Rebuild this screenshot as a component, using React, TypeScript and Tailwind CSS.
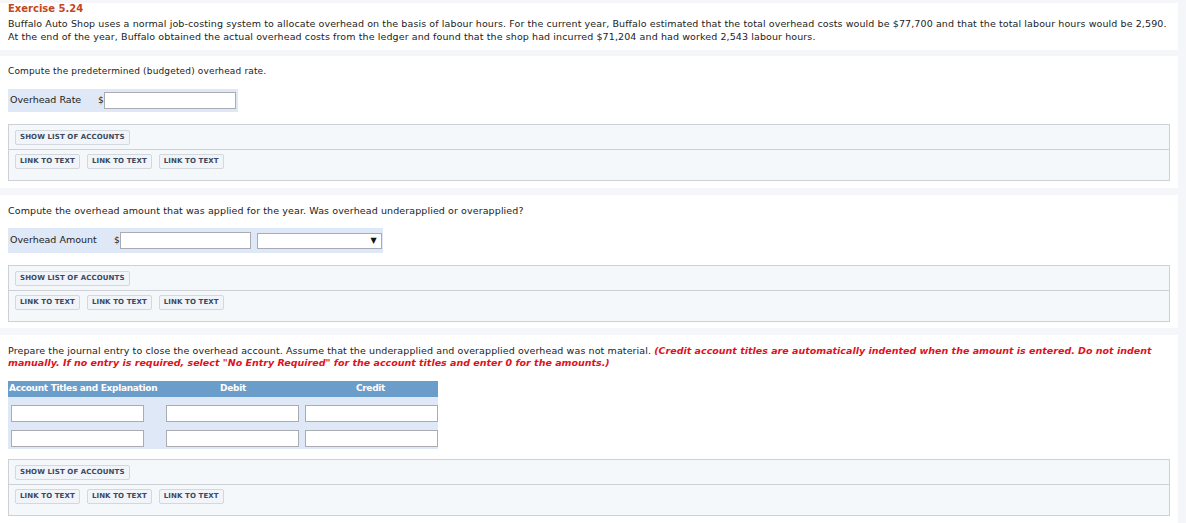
import React from "react";

const font = { fontFamily: '"DejaVu Sans", Verdana, sans-serif' };

const Btn = ({ label }: { label: string }) => (
  <button className="h-[15px] px-[4px] rounded-[2px] border border-[#d3d8de] bg-[#f1f4f8] text-[7px] font-bold tracking-[0.1px] text-[#394960] leading-none">
    {label}
  </button>
);

const Tools = ({ top = "mt-[12px]" }: { top?: string }) => (
  <div className={`${top} mr-[8px] border border-[#cdd1d6] bg-[#f5f8fb]`}>
    <div className="flex h-[25px] items-center border-b border-[#cdd1d6] px-[6px]">
      <Btn label="SHOW LIST OF ACCOUNTS" />
    </div>
    <div className="flex h-[30px] items-start gap-[7px] px-[6px] pt-[4px]">
      <Btn label="LINK TO TEXT" />
      <Btn label="LINK TO TEXT" />
      <Btn label="LINK TO TEXT" />
    </div>
  </div>
);

const Field = ({ w }: { w: string }) => (
  <input className={`${w} h-[17px] border border-[#a9adb3] bg-white`} />
);

export default function App() {
  return (
    <div className="min-h-[523px] bg-[#f4f6f9] pt-[3px] pr-[8px] text-[9px] text-[#222]" style={font}>
      <div className="bg-white px-[8px] pt-0 pb-[7px]">
        <div className="text-[10px] font-bold text-[#c4461d] leading-[11px]">Exercise 5.24</div>
        <p className="mt-[3px] text-[9.5px] tracking-[0.1px] leading-[13px]">
          Buffalo Auto Shop uses a normal job-costing system to allocate overhead on the basis of labour hours. For the current year, Buffalo estimated that the total overhead costs would be $77,700 and that the total labour hours would be 2,590.
          <br />
          At the end of the year, Buffalo obtained the actual overhead costs from the ledger and found that the shop had incurred $71,204 and had worked 2,543 labour hours.
        </p>
      </div>

      <div className="mt-[6px] bg-white pl-[8px] pt-[9px] pb-[7px]">
        <p className="leading-[13px] text-[9px] tracking-[0.15px]">Compute the predetermined (budgeted) overhead rate.</p>
        <div className="mt-[11px] flex h-[23px] w-[230px] items-center bg-[#dfe8f6] pl-[2px]">
          <span className="w-[88px] text-[9.5px]">Overhead Rate</span>
          <span>$</span>
          <Field w="w-[132px]" />
        </div>
        <Tools />
      </div>

      <div className="mt-[7px] bg-white pl-[8px] pt-[9px] pb-[6px]">
        <p className="leading-[13px] text-[9.5px] tracking-[0.1px]">Compute the overhead amount that was applied for the year. Was overhead underapplied or overapplied?</p>
        <div className="mt-[11px] flex h-[25px] w-[375px] items-center bg-[#dfe8f6] pl-[2px]">
          <span className="w-[104px] text-[9.5px]">Overhead Amount</span>
          <span>$</span>
          <Field w="w-[131px]" />
          <div className="ml-[6px] flex h-[16px] w-[125px] items-center justify-end border border-[#a9adb3] bg-white pr-[4px] text-[8px] text-[#111]">
            ▼
          </div>
        </div>
        <Tools />
      </div>

      <div className="mt-[7px] bg-white pl-[8px] pt-[10px] pb-[9px]">
        <p className="leading-[12px] text-[9.5px] tracking-[0.1px]">
          Prepare the journal entry to close the overhead account. Assume that the underapplied and overapplied overhead was not material.{" "}
          <span className="font-bold italic tracking-[0px] text-[#e0121b]">
            (Credit account titles are automatically indented when the amount is entered. Do not indent manually. If no entry is required, select "No Entry Required" for the account titles and enter 0 for the amounts.)
          </span>
        </p>
        <div className="mt-[12px] w-[430px]">
          <div className="grid h-[16px] grid-cols-[155px_140px_135px] items-center bg-[#6b9dca] font-bold text-white tracking-[-0.3px]">
            <span className="pl-[1px]">Account Titles and Explanation</span>
            <span className="text-center">Debit</span>
            <span className="text-center">Credit</span>
          </div>
          <div className="flex flex-col gap-[8px] bg-[#dfe8f6] pt-[8px] pb-[2px]">
            {[0, 1].map((r) => (
              <div key={r} className="flex items-center pl-[3px]">
                <Field w="w-[133px]" />
                <div className="ml-[22px]">
                  <Field w="w-[133px]" />
                </div>
                <div className="ml-[6px]">
                  <Field w="w-[133px]" />
                </div>
              </div>
            ))}
          </div>
        </div>
        <Tools top="mt-[10px]" />
      </div>
    </div>
  );
}
